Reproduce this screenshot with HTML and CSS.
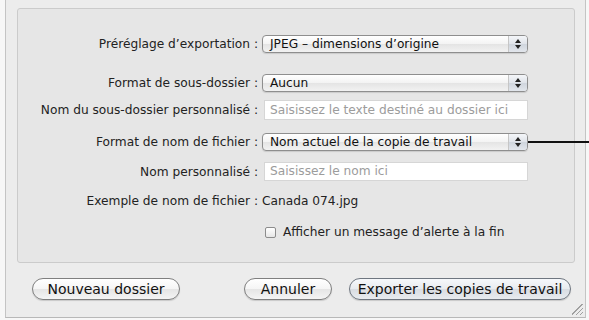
FILE: index.html
```html
<!DOCTYPE html>
<html lang="fr">

<head>
    <meta charset="UTF-8">
    <title>Exporter les copies de travail</title>
    <link rel="stylesheet" href="styles.css">
</head>

<body>
<div class="window">
    <div class="group-box">
        <!-- Preset -->
        <div class="row row-first">
            <label class="row-label">Préréglage d’exportation :</label>
            <div class="popup"><span class="popup-text">JPEG – dimensions d’origine</span><span class="popup-arrows"></span></div>
        </div>

        <!-- Subfolder -->
        <div class="row row-gap-lg">
            <label class="row-label">Format de sous-dossier :</label>
            <div class="popup"><span class="popup-text">Aucun</span><span class="popup-arrows"></span></div>
        </div>

        <div class="row row-gap-sm">
            <label class="row-label">Nom du sous-dossier personnalisé :</label>
            <div class="text-field field-tall">Saisissez le texte destiné au dossier ici</div>
        </div>

        <!-- File name -->
        <div class="row row-gap-md">
            <label class="row-label">Format de nom de fichier :</label>
            <div class="popup popup-callout"><span class="popup-text">Nom actuel de la copie de travail</span><span class="popup-arrows"></span>
                <span class="callout-line"></span>
            </div>
        </div>

        <div class="row row-gap-sm2">
            <label class="row-label">Nom personnalisé :</label>
            <div class="text-field">Saisissez le nom ici</div>
        </div>

        <div class="row row-gap-example row-text">
            <label class="row-label">Exemple de nom de fichier :</label>
            <div class="example">Canada 074.jpg</div>
        </div>

        <div class="row row-gap-md2 row-text">
            <span></span>
            <label class="check"><span class="check-box"></span>Afficher un message d’alerte à la fin</label>
        </div>
    </div>

    <div class="button-bar">
        <button class="push-button btn-new">Nouveau dossier</button>
        <div class="button-group">
            <button class="push-button btn-cancel">Annuler</button>
            <button class="push-button btn-export">Exporter les copies de travail</button>
        </div>
    </div>

    <div class="resize-grip"></div>
</div>
</body>

</html>
```

FILE: styles.css
```css
* {
    box-sizing: border-box;
}

body {
    margin: 0;
    background: #f7f7f7;
    font-family: "DejaVu Sans", "Liberation Sans", sans-serif;
    font-size: 12.2px;
    color: #222;
    overflow: hidden;
}

.window {
    position: relative;
    margin-left: 5px;
    width: 581px;
    height: 318px;
    background: #ececec;
    border-left: 1px solid #c4c4c4;
    border-right: 1px solid #c4c4c4;
    border-bottom: 1px solid #b8b8b8;
    padding: 8px 0 0 11px;
}

.group-box {
    width: 558px;
    height: 255px;
    background: #e6e6e6;
    border: 1px solid #cbcbcb;
    border-radius: 3px;
    padding-top: 26px;
}

.row {
    display: grid;
    grid-template-columns: 240px 266px;
    column-gap: 4px;
    align-items: center;
    height: 18px;
}

.row-label {
    text-align: right;
    white-space: nowrap;
}

.row-gap-lg {
    margin-top: 21px;
}

.row-gap-sm {
    margin-top: 8px;
    height: 20px;
}

.row-gap-md {
    margin-top: 13px;
}

.row-gap-sm2 {
    margin-top: 11px;
}

.row-gap-example {
    margin-top: 13px;
}

.row-text {
    height: 16px;
}

.row-gap-md2 {
    margin-top: 15px;
}

/* popup buttons */
.popup {
    position: relative;
    display: flex;
    align-items: center;
    height: 18px;
    border: 1px solid #8e8e8e;
    border-radius: 4px;
    background: linear-gradient(#ffffff, #f3f3f3 50%, #e4e4e4 51%, #f2f2f2);
    box-shadow: 0 1px 1px rgba(0, 0, 0, 0.12);
}

.popup-text {
    flex: 1;
    padding-left: 7px;
    color: #111;
    white-space: nowrap;
}

.popup-arrows {
    position: relative;
    width: 19px;
    height: 100%;
    border-left: 1px solid #c6c6c6;
    border-radius: 0 3px 3px 0;
    background: linear-gradient(#f4f6f9, #dfe3e9 50%, #cfd5dd 51%, #e2e6ec);
}

.popup-arrows::before,
.popup-arrows::after {
    content: "";
    position: absolute;
    left: 6px;
    border-left: 3px solid transparent;
    border-right: 3px solid transparent;
}

.popup-arrows::before {
    top: 3px;
    border-bottom: 4px solid #222;
}

.popup-arrows::after {
    bottom: 3px;
    border-top: 4px solid #222;
}

.callout-line {
    position: absolute;
    left: 265px;
    top: 7px;
    width: 68px;
    height: 2px;
    background: #111;
}

/* text fields */
.text-field {
    height: 19px;
    margin-left: 2px;
    padding: 1px 0 0 5px;
    background: #fff;
    border: 1px solid #d6d6d6;
    color: #9c9c9c;
    white-space: nowrap;
}

.field-tall {
    height: 20px;
    padding-top: 2px;
}

.example {
    color: #222;
}

/* checkbox */
.check {
    display: flex;
    align-items: center;
    margin-left: 3px;
    white-space: nowrap;
}

.check-box {
    width: 11px;
    height: 11px;
    margin-right: 7px;
    border: 1px solid #8c8c8c;
    border-radius: 2px;
    background: linear-gradient(#ffffff, #e6e6e6);
}

/* bottom buttons */
.button-bar {
    display: flex;
    justify-content: space-between;
    width: 554px;
    margin-top: 15px;
    padding-left: 15px;
}

.button-group {
    display: flex;
    gap: 17px;
}

.push-button {
    height: 22px;
    padding: 0 10px;
    font-family: inherit;
    font-size: 14px;
    color: #111;
    border: 1px solid #7f7f7f;
    border-radius: 11px;
    background: linear-gradient(#ffffff, #f5f5f5 50%, #e5e5e5 51%, #f4f4f4);
    box-shadow: 0 1px 1px rgba(0, 0, 0, 0.15);
}

.btn-new {
    width: 148px;
}

.btn-cancel {
    width: 88px;
}

.btn-export {
    width: 222px;
    padding: 0 4px;
    border-color: #6f7680;
    background: linear-gradient(#f6f8fb, #e8ebef 50%, #d8dce2 51%, #e8ebef);
}

.resize-grip {
    position: absolute;
    right: 2px;
    bottom: 2px;
    width: 11px;
    height: 11px;
    background: linear-gradient(135deg, transparent 45%, #a0a0a0 45%, #a0a0a0 52%, transparent 52%, transparent 64%, #a0a0a0 64%, #a0a0a0 71%, transparent 71%, transparent 83%, #a0a0a0 83%, #a0a0a0 90%, transparent 90%);
}
```
